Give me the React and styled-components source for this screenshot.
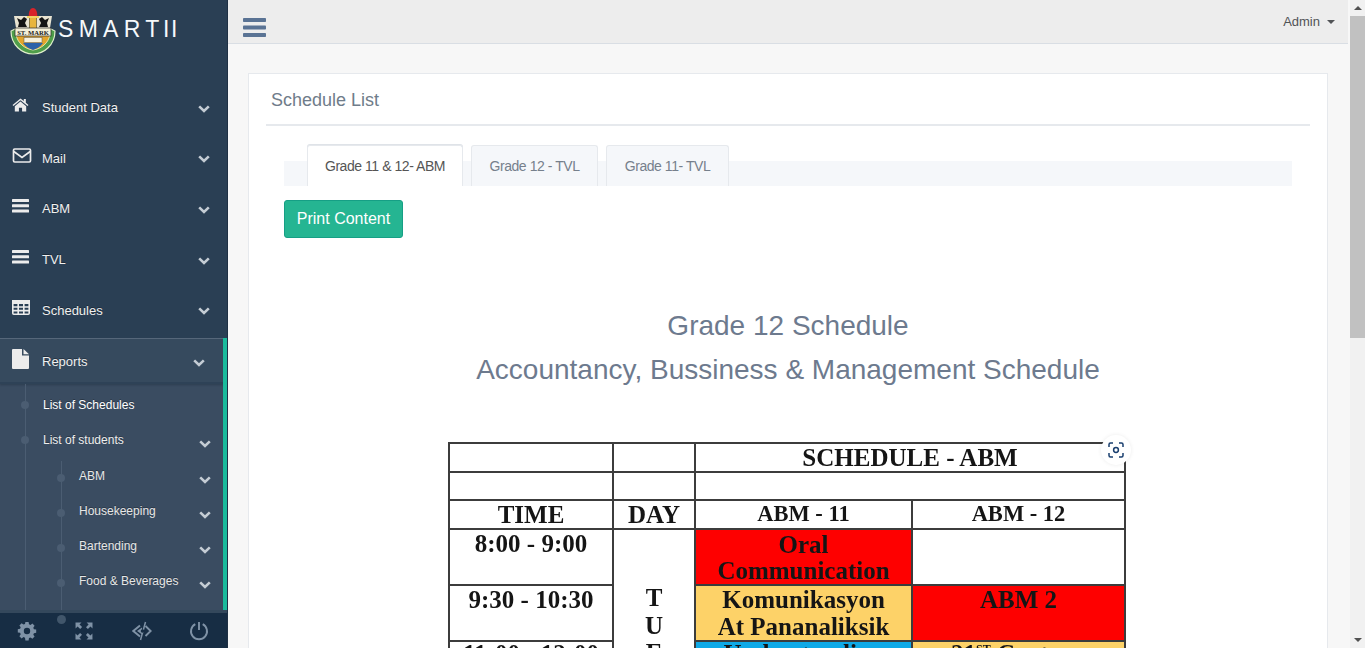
import React from "react";
import styled, { createGlobalStyle } from "styled-components";

const Global = createGlobalStyle`
  html, body { margin: 0; height: 100%; overflow: hidden; }
  body { font-family: "Liberation Sans", Arial, sans-serif; background: #f7f7f7; }
  * { box-sizing: border-box; }
`;
const Page = styled.div`display: flex; height: 100vh; overflow: hidden;`;
const Sidebar = styled.aside`
  width: 228px; flex: none; background: #2a3f54; display: flex; flex-direction: column;
  position: relative; overflow: hidden; border-right: 1px solid #1f3044;
`;
const Brand = styled.div`height: 83px; flex: none; display: flex; align-items: flex-start; padding: 7px 0 0 10px;`;
const BrandName = styled.span`
  color: #f6f9fb; font-size: 23px; letter-spacing: 5.3px; margin: 10px 0 0 2px; line-height: 24px; white-space: nowrap;
`;
const BrandTail = styled.span`letter-spacing: 1.6px; margin-left: -1.5px;`;
const Nav = styled.nav`flex: 1; min-height: 0; overflow: hidden; display: flex; flex-direction: column;`;
const NavRow = styled.div`
  height: 50.6px; flex: none; display: flex; align-items: center; color: #f0f0f0; font-size: 13px;
  text-shadow: rgba(0,0,0,.35) 0 -1px 0; padding-left: 12px; padding-bottom: 1px;
`;
const IconSlot = styled.span`width: 30px; flex: none; display: flex; margin-top: -5px;`;
const Chevron = styled.svg`width: 12px; height: 8px; display: block; margin-left: auto; margin-right: ${p => p.$mr || 17}px; margin-top: 2px;`;
const Active = styled.div`
  flex: 1; min-height: 0; background: #3a4c61; border-right: 5px solid #1abb9c; overflow: hidden;
  display: flex; flex-direction: column; margin: 2px -1px 0 0;
`;
const ActiveHead = styled(NavRow)`
  height: 46px; padding-top: 3px; padding-bottom: 0; background: #364a5e; border-top: 1px solid #56677a; border-bottom: 2px solid #2e4257;
  box-shadow: 0 1px 2px rgba(20,35,50,.35);
`;
const SubList = styled.div`
  position: relative; padding-top: 4px; flex: none;
  &::before { content: ""; position: absolute; left: 25px; top: 0; height: 420px; width: 1px; background: #4b5d72; }
`;
const SubItem = styled.div`
  height: 35px; display: flex; align-items: center; position: relative; color: ${p => p.$on ? "#fff" : "#eeeeee"};
  font-size: 12px; padding-left: 43px; text-shadow: rgba(0,0,0,.3) 0 -1px 0;
  &::before { content: ""; position: absolute; left: 21px; top: 13px; width: 8px; height: 8px; border-radius: 50%; background: #4b5d72; }
`;
const Nested = styled.div`
  position: relative; flex: none; padding-top: 1px;
  &::before { content: ""; position: absolute; left: 61px; top: 3px; height: 220px; width: 1px; background: #4b5d72; }
`;
const NestedItem = styled(SubItem)`
  padding-left: 79px; color: #e7e7e7;
  &::before { left: 57px; top: 15px; }
`;
const SubChevron = styled(Chevron)`margin-right: 12px; margin-top: 7px;`;
const Footer = styled.div`
  height: 35px; flex: none; background: #172d44; display: grid; grid-template-columns: repeat(4, 57.5px);
  align-items: center; justify-items: center; position: relative; margin: 0 -1px 0 -2px;
  box-shadow: 0 -3px 0 #34485c;
  &::before { content: ""; position: absolute; left: 59px; top: 2px; width: 9px; height: 9px; border-radius: 50%; background: #41566b; }
`;
const Main = styled.main`flex: 1; min-width: 0; display: flex; flex-direction: column; overflow: hidden;`;
const TopBar = styled.header`
  height: 44px; flex: none; background: #ededed; border-bottom: 1px solid #d9dee4; display: flex; align-items: flex-start;
  justify-content: space-between; padding: 18px 13px 0 15px;
`;
const Burger = styled.svg`width: 23px; height: 19px; display: block;`;
const Admin = styled.div`color: #515356; font-size: 13px; margin-top: -4px; display: flex; align-items: center; gap: 7px; line-height: 15px;`;
const Caret = styled.span`width: 0; height: 0; border: 4px solid transparent; border-top-color: #515356; border-bottom: 0;`;
const Content = styled.div`flex: 1; min-height: 0; overflow: hidden; padding: 29px 20px 0 20px; background: #f7f7f7;`;
const Panel = styled.section`background: #fff; border: 1px solid #e6e9ed; padding: 10px 17px 0; height: 800px;`;
const PanelTitle = styled.h2`
  margin: 0; height: 42px; border-bottom: 2px solid #e6e9ed; color: #6f7c8a; font-weight: 400; font-size: 18px;
  line-height: 32px; padding-left: 5px;
`;
const Body = styled.div`padding: 19px 18px 0;`;
const TabBar = styled.div`height: 25px; background: #f5f7fa; margin-top: 16px; display: flex; align-items: flex-end; gap: 8px; padding-left: 23px;`;
const Tab = styled.div`
  height: 41px; flex: none; width: ${p => p.$w}px; display: flex; align-items: center; justify-content: center; font-size: 14px;
  background: ${p => p.$on ? "#fff" : "#f5f7fa"}; color: ${p => p.$on ? "#555" : "#76808c"};
  border: 1px solid #e6e9ed; border-bottom: 0; border-radius: 3px 3px 0 0; letter-spacing: -.45px;
  ${p => p.$on && "box-shadow: 0 -1px 0 #dfe3e8;"}
`;
const PrintButton = styled.button`
  display: block; margin: 14px 0 0; width: 119px; height: 38px; background: #25b592; border: 1px solid #169f85; border-radius: 3px;
  color: #fff; font: 16px "Liberation Sans", Arial, sans-serif; padding: 0;
`;
const Heading = styled.div`text-align: center; color: #6d7a8e; font-size: 28px; line-height: 44px; margin-top: 66px;`;
const ScheduleWrap = styled.div`position: relative; width: 676px; margin: 50px 0 0 164px;`;
const ScheduleTable = styled.table`
  border-collapse: collapse; table-layout: fixed; width: 676px; font-family: "Liberation Serif", "Times New Roman", serif;
  font-weight: 700; color: #151515; text-align: center; filter: blur(.5px);
  td { border: 2px solid #3c3c3c; padding: 0; overflow: hidden; vertical-align: top; }
`;
const Row = styled.tr`height: ${p => p.$h}px;`;
const Cell = styled.td`
  background: ${p => p.$bg || "#fff"}; font-size: ${p => p.$fs || 25}px; line-height: ${p => p.$lh || 27}px; white-space: nowrap;
  && { padding-top: ${p => p.$pt || 0}px; }
`;
const DayCell = styled(Cell)`&& { padding-top: 54px; } line-height: 27.5px;`;
const Lens = styled.div`
  position: absolute; right: -7px; top: -7px; width: 30px; height: 30px; border-radius: 50%; background: #fff;
  box-shadow: 0 0 4px rgba(0,0,0,.08); display: flex; align-items: center; justify-content: center; z-index: 2;
`;
const Scrollbar = styled.div`width: 17px; flex: none; background: #f1f1f1; border-left: 2px solid #f7f7f7; display: flex; flex-direction: column; align-items: stretch;`;
const ScrollArrow = styled.div`height: 16px; flex: none; display: flex; align-items: center; justify-content: center; background: #f1f1f1;`;
const ArrowUp = styled.span`width: 0; height: 0; border: 4px solid transparent; border-bottom: 4px solid #505050; border-top: 0;`;
const ArrowDown = styled.span`width: 0; height: 0; border: 4px solid transparent; border-top: 4px solid #505050; border-bottom: 0;`;
const Thumb = styled.div`height: 322px; flex: none; background: #c1c1c1;`;
const Track = styled.div`flex: 1;`;
const Super = styled.sup`font-size: 12px; line-height: 0;`;

const ChevronIcon = ({ as: C = Chevron, mr }) => (
  <C $mr={mr} viewBox="0 0 12 8" fill="none" stroke="#c4ccd4" strokeWidth="2.6"><path d="M1.2 1.4 6 6l4.8-4.6" /></C>
);
const c = "#ececec";
const Home = () => (
  <svg width="17" height="14" viewBox="0 0 19 16" fill={c}>
    <path d="M9.5 0.5 0.4 8l1 1.2L9.5 2.6l8.1 6.6 1-1.2-3-2.5V1h-2.3v2.4z" />
    <path d="M9.5 4 3 9.3V15.5h4.7v-4.5h3.6v4.5H16V9.3z" />
  </svg>
);
const Mail = () => (
  <svg width="20" height="15" viewBox="0 0 19 15" fill="none" stroke={c} strokeWidth="1.7">
    <rect x="1" y="1" width="17" height="13" rx="1.2" /><path d="M1.3 3.5 9.5 9.5l8.2-6" />
  </svg>
);
const Bars = () => (
  <svg width="17" height="14" viewBox="0 0 17 14" fill={c}>
    <rect width="17" height="3" y="0" rx=".6" /><rect width="17" height="3" y="5.3" rx=".6" /><rect width="17" height="3" y="10.6" rx=".6" />
  </svg>
);
const Grid = () => (
  <svg width="18" height="15" viewBox="0 0 18 15" fill="none" stroke={c} strokeWidth="1.6">
    <rect x=".8" y=".8" width="16.4" height="13.4" rx="1" fill="none" />
    <rect x="0" y="0" width="18" height="4" fill={c} stroke="none" />
    <path d="M.8 7h16.4M.8 10.6h16.4M6.2 3v11M11.8 3v11" />
  </svg>
);
const File = () => (
  <svg width="17" height="20" viewBox="0 0 17 20" fill={c}>
    <path d="M1 0h9v6.5h7V19a1 1 0 0 1-1 1H1a1 1 0 0 1-1-1V1a1 1 0 0 1 1-1z" /><path d="M11.5 0 17 5.2h-5.5z" />
  </svg>
);
const Crest = () => (
  <svg width="46" height="48" viewBox="0 0 46 48" style={{ display: "block", flex: "none" }}>
    <path d="M1 24 C1 38 12 47 23 47 C34 47 45 38 45 24 L41 22 H5z" fill="#4f9e4a" stroke="#dfeecb" strokeWidth="1.2" />
    <path d="M6 27 C7 36 15 42 23 43 C31 42 39 36 40 27z" fill="#e3a52b" stroke="#f8efc8" strokeWidth=".8" />
    <path d="M13 36 C16 40 20 42 23 43 C26 42 30 40 33 36z" fill="#2b62a8" />
    <path d="M4 9h15v12H6zM42 9H27v12h13z" fill="#e9e4d2" />
    <path d="M7 11l4 2 3-3 3 2-2 4 2 4H8l1-4zM39 11l-4 2-3-3-3 2 2 4-2 4h9l-1-4z" fill="#141414" />
    <rect x="19.5" y="9" width="7" height="13" fill="#e8b53c" />
    <path d="M19 10 C18 6 20 1 23 1 C26 1 28 6 27 10z" fill="#d8232a" />
    <rect x="17" y="9" width="12" height="2" fill="#f2d265" />
    <rect x="5" y="21" width="36" height="8" fill="#f5f0d8" stroke="#2c2c2c" strokeWidth=".7" />
    <text x="23" y="27.5" textAnchor="middle" fontFamily="Liberation Serif, serif" fontSize="6.6" fontWeight="700" fill="#222">ST. MARK</text>
    <rect x="14" y="30.5" width="18" height="5" fill="#f6f1dc" stroke="#555" strokeWidth=".5" />
  </svg>
);

const FooterIcon = styled.svg`width: 20px; height: 20px; display: block;`;
const fc = "#7f92a6";
const Gear = () => (
  <FooterIcon viewBox="0 0 20 20" fill={fc}>
    <path fillRule="evenodd" d="M8.4 1h3.2l.4 2.3 1.5.6 1.9-1.3 2.2 2.2-1.3 1.9.6 1.5 2.3.4v3.2l-2.3.4-.6 1.5 1.3 1.9-2.2 2.2-1.9-1.3-1.5.6-.4 2.3H8.4L8 16.7l-1.5-.6-1.9 1.3-2.2-2.2 1.3-1.9-.6-1.5-2.3-.4V8.2l2.3-.4.6-1.5-1.3-1.9 2.2-2.2 1.9 1.3L8 2.9zM10 6.8a3.2 3.2 0 1 0 0 6.4 3.2 3.2 0 0 0 0-6.4z" />
  </FooterIcon>
);
const Expand = () => (
  <FooterIcon viewBox="0 0 20 20" fill={fc}>
    <path d="M1.5 1.5h6l-2 2 2.6 2.6-1.9 1.9L3.6 5.4l-2 2zM18.5 1.5v6l-2-2-2.6 2.6-1.9-1.9 2.6-2.6-2-2zM1.5 18.5v-6l2 2 2.6-2.6 1.9 1.9-2.6 2.6 2 2zM18.5 18.5h-6l2-2-2.6-2.6 1.9-1.9 2.6 2.6 2-2z" />
  </FooterIcon>
);
const EyeCode = () => (
  <svg width="20" height="20" viewBox="0 0 20 20" fill="none" stroke={fc} strokeWidth="1.9" style={{ display: "block" }}>
    <path d="M8 4.5 1.3 10 8 15.5M13.5 5l5.2 5-5.2 5" />
    <path d="M10 6.5 5 10l5 3.5z" fill={fc} stroke="none" />
    <path d="M13.5 1 8.5 19" strokeWidth="1.5" />
    <circle cx="10.5" cy="10" r="1.8" fill="#172d44" stroke="none" />
  </svg>
);
const Power = () => (
  <FooterIcon viewBox="0 0 20 20" fill="none" stroke={fc} strokeWidth="1.9">
    <path d="M6.3 3.2a8 8 0 1 0 7.4 0" /><path d="M10 1v8" />
  </FooterIcon>
);

const items = [["Student Data", Home], ["Mail", Mail], ["ABM", Bars], ["TVL", Bars], ["Schedules", Grid]];
const nested = ["ABM", "Housekeeping", "Bartending", "Food & Beverages"];

export default function App() {
  return (
    <Page>
      <Global />
      <Sidebar>
        <Brand><Crest /><BrandName>SMART<BrandTail>II</BrandTail></BrandName></Brand>
        <Nav>
          {items.map(([t, I]) => (
            <NavRow key={t}><IconSlot><I /></IconSlot>{t}<ChevronIcon /></NavRow>
          ))}
          <Active>
            <ActiveHead><IconSlot><File /></IconSlot>Reports<ChevronIcon mr={18} /></ActiveHead>
            <SubList>
              <SubItem $on>List of Schedules</SubItem>
              <SubItem>List of students<ChevronIcon as={SubChevron} /></SubItem>
              <Nested>
                {nested.map(n => <NestedItem key={n}>{n}<ChevronIcon as={SubChevron} /></NestedItem>)}
              </Nested>
            </SubList>
          </Active>
        </Nav>
        <Footer><Gear /><Expand /><EyeCode /><Power /></Footer>
      </Sidebar>
      <Main>
        <TopBar>
          <Burger viewBox="0 0 23 19" fill="#5a7394">
            <rect width="23" height="4" rx=".8" y="0" /><rect width="23" height="4" rx=".8" y="7.5" /><rect width="23" height="4" rx=".8" y="15" />
          </Burger>
          <Admin>Admin<Caret /></Admin>
        </TopBar>
        <Content>
          <Panel>
            <PanelTitle>Schedule List</PanelTitle>
            <Body>
              <TabBar>
                <Tab $on $w={156}>Grade 11 &amp; 12- ABM</Tab>
                <Tab $w={127}>Grade 12 - TVL</Tab>
                <Tab $w={123}>Grade 11- TVL</Tab>
              </TabBar>
              <PrintButton>Print Content</PrintButton>
              <Heading>Grade 12 Schedule<br />Accountancy, Bussiness &amp; Management Schedule</Heading>
              <ScheduleWrap>
                <ScheduleTable>
                  <colgroup><col width="164" /><col width="82" /><col width="217" /><col width="213" /></colgroup>
                  <tbody>
                    <Row $h={29}><Cell /><Cell /><Cell colSpan={2}>SCHEDULE - ABM</Cell></Row>
                    <Row $h={28}><Cell /><Cell /><Cell colSpan={2} /></Row>
                    <Row $h={29}><Cell>TIME</Cell><Cell>DAY</Cell><Cell $fs={22.5} $lh={25}>ABM - 11</Cell><Cell $fs={22.5} $lh={25}>ABM - 12</Cell></Row>
                    <Row $h={56}>
                      <Cell>8:00 - 9:00</Cell>
                      <DayCell rowSpan={3}>T<br />U<br />E</DayCell>
                      <Cell $bg="#fe0000" $lh={26} $pt={2}>Oral<br />Communication</Cell>
                      <Cell />
                    </Row>
                    <Row $h={56}>
                      <Cell>9:30 - 10:30</Cell>
                      <Cell $bg="#fdd268">Komunikasyon<br />At Pananaliksik</Cell>
                      <Cell $bg="#fe0000">ABM 2</Cell>
                    </Row>
                    <Row $h={56}>
                      <Cell $lh={23}>11:00 - 12:00</Cell>
                      <Cell $bg="#0fa9e6" $lh={23}>Understanding</Cell>
                      <Cell $bg="#fdd268" $lh={23}>21<Super>ST</Super> Century</Cell>
                    </Row>
                  </tbody>
                </ScheduleTable>
                <Lens>
                  <svg width="16" height="16" viewBox="0 0 16 16" fill="none" stroke="#1a3f6f" strokeWidth="1.5">
                    <path d="M5 1H2.5A1.5 1.5 0 0 0 1 2.5V5M11 1h2.5A1.5 1.5 0 0 1 15 2.5V5M5 15H2.5A1.5 1.5 0 0 1 1 13.5V11M15 11v2.5a1.5 1.5 0 0 1-1.5 1.5H11" />
                    <circle cx="8" cy="8" r="2.4" />
                  </svg>
                </Lens>
              </ScheduleWrap>
            </Body>
          </Panel>
        </Content>
      </Main>
      <Scrollbar>
        <ScrollArrow><ArrowUp /></ScrollArrow>
        <Thumb />
        <Track />
        <ScrollArrow><ArrowDown /></ScrollArrow>
      </Scrollbar>
    </Page>
  );
}
